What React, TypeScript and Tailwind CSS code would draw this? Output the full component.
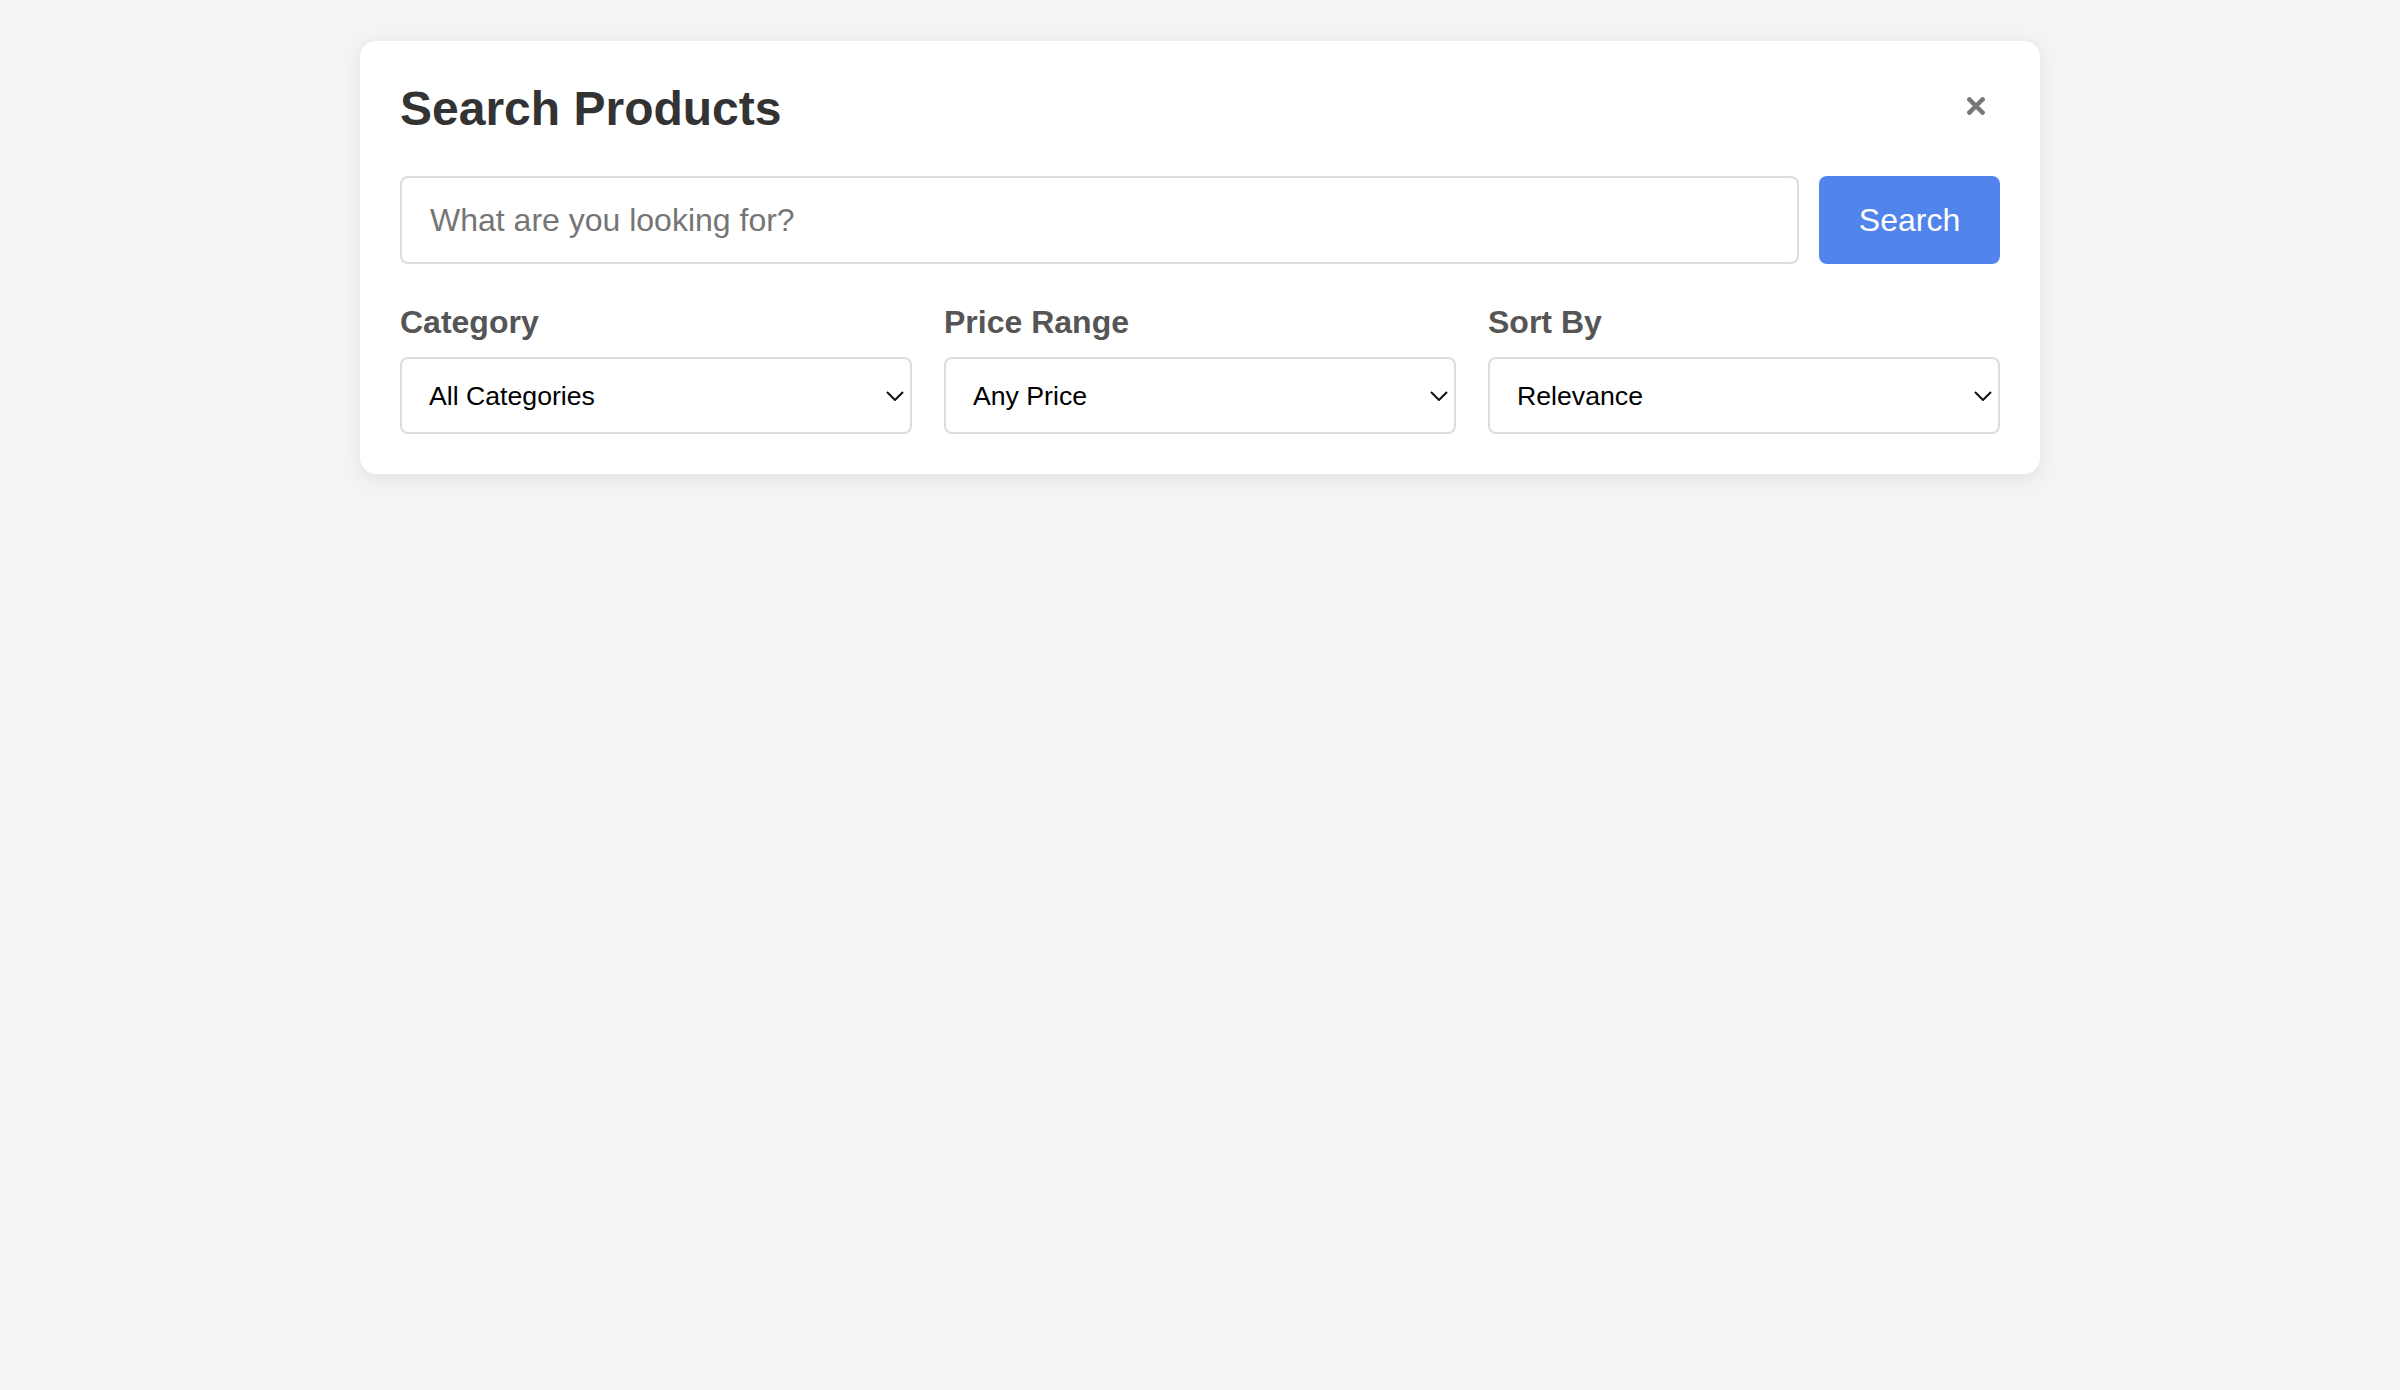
import { useState } from 'react';

const selects = [
  { id: 'category', label: 'Category', options: ['All Categories', 'Electronics', 'Clothing', 'Home & Garden', 'Books'] },
  { id: 'price', label: 'Price Range', options: ['Any Price', 'Under $25', '$25 - $50', '$50 - $100', 'Over $100'] },
  { id: 'sort', label: 'Sort By', options: ['Relevance', 'Price: Low to High', 'Price: High to Low', 'Newest'] },
];

function Chevron() {
  return (
    <svg
      className="pointer-events-none absolute right-[8px] top-1/2 -translate-y-1/2"
      width="18"
      height="10"
      viewBox="0 0 18 10"
      fill="none"
      stroke="#111"
      strokeWidth={2}
    >
      <path d="M1 1l8 8 8-8" />
    </svg>
  );
}

export default function App() {
  const [query, setQuery] = useState('');

  return (
    <div className="min-h-screen bg-[#f4f4f4] pt-[41px] font-['Liberation_Sans',Arial,sans-serif]">
      <div className="mx-auto w-[1680px] rounded-[16px] bg-white p-10 shadow-[0_4px_20px_rgba(0,0,0,0.08)]">
        <div className="mb-10 flex items-center justify-between">
          <h2 className="text-[48px] font-bold leading-[55px] text-[#333]">Search Products</h2>
          <button className="-mt-[5px] mr-[4px] flex h-[40px] w-[40px] items-center justify-center" aria-label="Close">
            <svg width="18" height="18" viewBox="0 0 18 18" stroke="#777" strokeWidth={4.5} strokeLinecap="square">
              <path d="M2.5 2.5l13 13M15.5 2.5l-13 13" />
            </svg>
          </button>
        </div>

        <div className="mb-10 flex gap-5">
          <input
            value={query}
            onChange={(e) => setQuery(e.target.value)}
            placeholder="What are you looking for?"
            className="h-[88px] flex-1 rounded-[8px] border-2 border-[#ddd] px-[28px] text-[32px] text-[#333] outline-none placeholder:text-[#757575]"
          />
          <button className="h-[88px] w-[181px] rounded-[8px] bg-[#5285ec] text-[32px] text-white">Search</button>
        </div>

        <div className="grid grid-cols-3 gap-8">
          {selects.map((s) => (
            <div key={s.id}>
              <label htmlFor={s.id} className="mb-4 block text-[32px] font-bold leading-[37px] text-[#555]">
                {s.label}
              </label>
              <div className="relative">
                <select
                  id={s.id}
                  className="h-[77px] w-full appearance-none rounded-[8px] border-2 border-[#ddd] bg-white pl-[27px] text-[26.67px] text-black outline-none"
                >
                  {s.options.map((o) => (
                    <option key={o}>{o}</option>
                  ))}
                </select>
                <Chevron />
              </div>
            </div>
          ))}
        </div>
      </div>
    </div>
  );
}
